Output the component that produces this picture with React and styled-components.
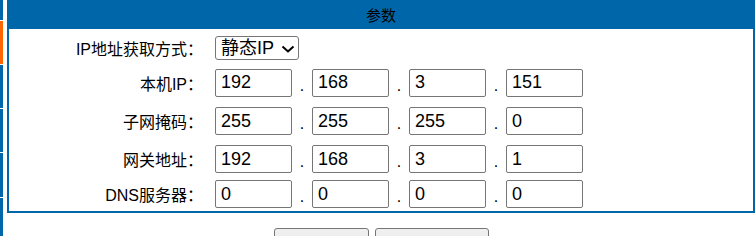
import React from 'react'
import styled, { createGlobalStyle } from 'styled-components'

const BLUE = '#0066aa'

const GlobalStyle = createGlobalStyle`
  html, body {
    margin: 0;
    padding: 0;
    background: #fff;
    font-family: "Liberation Sans", "Noto Sans CJK SC", sans-serif;
    overflow: hidden;
  }
`

const Page = styled.div`
  display: flex;
  width: 755px;
  height: 236px;
  overflow: hidden;
`

const Sidebar = styled.div`
  width: 3px;
  flex-shrink: 0;
  display: flex;
  flex-direction: column;
  background: ${BLUE};
`

const MenuItem = styled.div`
  height: ${({ $h }) => $h}px;
  flex-shrink: 0;
  background: ${({ $active }) => ($active ? '#ff6600' : BLUE)};
  border-top: ${({ $first }) => ($first ? 'none' : '1px solid #fff')};
`

const Main = styled.div`
  flex: 1;
  margin-left: 4px;
  display: flex;
  flex-direction: column;
  align-items: center;
`

const Panel = styled.div`
  width: 100%;
  box-sizing: border-box;
  border: 2px solid ${BLUE};
  border-top: none;
`

const PanelHeader = styled.div`
  height: 29px;
  margin: 0 -2px;
  background: ${BLUE};
  color: #000;
  font-size: 15px;
  display: flex;
  align-items: center;
  justify-content: center;
`

const Form = styled.div`
  padding-top: 2px;
  display: flex;
  flex-direction: column;
`

const Row = styled.div`
  height: ${({ $h }) => $h}px;
  display: grid;
  grid-template-columns: 194px 1fr;
  column-gap: 12px;
  align-items: center;
`

const Label = styled.div`
  text-align: right;
  font-size: 16px;
  color: #000;
  white-space: nowrap;
`

const Fields = styled.div`
  display: flex;
  align-items: center;
`

const Octet = styled.input`
  width: 77px;
  height: 28px;
  box-sizing: border-box;
  border: 1px solid #767676;
  border-radius: 2px;
  padding: 0 5px;
  font-family: "Liberation Sans", sans-serif;
  font-size: 18px;
  color: #000;
  background: #fff;
  outline: none;
`

const Dot = styled.span`
  width: 20px;
  text-align: center;
  font-size: 16px;
  line-height: 16px;
  padding-top: 6px;
  color: #000;
`

const SelectWrap = styled.div`
  position: relative;
  width: 84px;
  height: 24px;
`

const Select = styled.select`
  appearance: none;
  width: 100%;
  height: 100%;
  box-sizing: border-box;
  border: 1px solid #767676;
  border-radius: 3px;
  padding: 0 0 0 5px;
  font-family: "Liberation Sans", "Noto Sans CJK SC", sans-serif;
  font-size: 18px;
  color: #000;
  background: #fff;
  outline: none;
`

const Chevron = styled.svg`
  position: absolute;
  right: 4px;
  top: 9px;
  pointer-events: none;
`

const Buttons = styled.div`
  margin-top: 15px;
  display: flex;
  gap: 6px;
`

const Button = styled.button`
  width: ${({ $w }) => $w}px;
  height: 48px;
  box-sizing: border-box;
  background: #efefef;
  border: 1px solid #767676;
  border-radius: 3px;
  font-family: "Liberation Sans", "Noto Sans CJK SC", sans-serif;
  font-size: 14px;
  padding-top: 24px;
  color: #000;
`

const menu = [
  { h: 20, first: true },
  { h: 43, active: true },
  { h: 43 },
  { h: 43 },
  { h: 44 },
  { h: 43 },
]

const rows = [
  { label: 'IP地址获取方式：', h: 33, select: true },
  { label: '本机IP：', h: 37, values: ['192', '168', '3', '151'] },
  { label: '子网掩码：', h: 40, values: ['255', '255', '255', '0'] },
  { label: '网关地址：', h: 36, values: ['192', '168', '3', '1'] },
  { label: 'DNS服务器：', h: 34, values: ['0', '0', '0', '0'] },
]

const IpFields = ({ values }) => (
  <Fields>
    {values.map((v, i) => (
      <React.Fragment key={i}>
        {i > 0 && <Dot>.</Dot>}
        <Octet defaultValue={v} />
      </React.Fragment>
    ))}
  </Fields>
)

const App = () => {
  return (
    <Page>
      <GlobalStyle />
      <Sidebar>
        {menu.map((m, i) => (
          <MenuItem key={i} $h={m.h} $active={m.active} $first={m.first} />
        ))}
      </Sidebar>
      <Main>
        <Panel>
          <PanelHeader>参数</PanelHeader>
          <Form>
            {rows.map((r) => (
              <Row key={r.label} $h={r.h}>
                <Label>{r.label}</Label>
                {r.select ? (
                  <SelectWrap>
                    <Select defaultValue="static">
                      <option value="static">静态IP</option>
                      <option value="dhcp">DHCP</option>
                    </Select>
                    <Chevron width="14" height="8" viewBox="0 0 14 8">
                      <path d="M1.5 1.5 L7 6.5 L12.5 1.5" fill="none" stroke="#000" strokeWidth="2" />
                    </Chevron>
                  </SelectWrap>
                ) : (
                  <IpFields values={r.values} />
                )}
              </Row>
            ))}
          </Form>
        </Panel>
        <Buttons>
          <Button $w={95}>保存</Button>
          <Button $w={114}>恢复默认</Button>
        </Buttons>
      </Main>
    </Page>
  )
}

export default App
